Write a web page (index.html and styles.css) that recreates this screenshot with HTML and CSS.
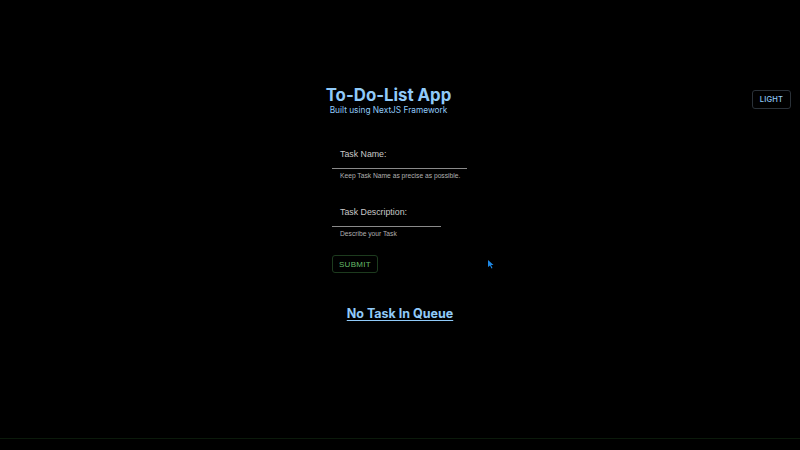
FILE: index.html
```html
<!DOCTYPE html>
<html>
<head>
<meta charset="utf-8">
<link rel="stylesheet" href="styles.css">
</head>
<body>
<div class="page">
  <header class="header">
    <div class="brand">
      <h1 class="title">To-Do-List App</h1>
      <p class="subtitle">Built using NextJS Framework</p>
    </div>
    <button class="theme-btn">LIGHT</button>
  </header>
  <form class="form">
    <div class="field">
      <label class="label">Task Name:</label>
      <div class="line line-name"></div>
      <p class="helper">Keep Task Name as precise as possible.</p>
    </div>
    <div class="field field-desc">
      <label class="label">Task Description:</label>
      <div class="line line-desc"></div>
      <p class="helper">Describe your Task</p>
    </div>
    <div class="actions">
      <button type="button" class="submit">SUBMIT</button>
      <svg class="cursor" width="6" height="9" viewBox="0 0 6 9"><path d="M0 0 L0 7 L2 5.5 L3.5 8.5 L4.5 8 L3 5 L5.5 5 Z" fill="#1e88e5"/></svg>
    </div>
  </form>
  <div class="empty"><a class="empty-link">No Task In Queue</a></div>
  <div class="footer-line"></div>
</div>
</body>
</html>
```
FILE: styles.css
```css
html, body {
  margin: 0;
  padding: 0;
  background: #000;
  width: 800px;
  height: 450px;
  overflow: hidden;
}
.page {
  display: flex;
  flex-direction: column;
  height: 450px;
  font-family: Inter, "Liberation Sans", sans-serif;
}
.header {
  display: flex;
  align-items: flex-start;
  padding-top: 85px;
}
.brand {
  margin-left: 326px;
  width: 125px;
  display: flex;
  flex-direction: column;
  align-items: center;
}
.title {
  margin: 0;
  font-size: 16.8px;
  font-weight: 700;
  line-height: 20px;
  color: #90caf9;
  white-space: nowrap;
}
.subtitle {
  margin: 0;
  font-size: 8.3px;
  line-height: 11px;
  color: #90caf9;
  white-space: nowrap;
}
.theme-btn {
  margin-left: auto;
  margin-right: 9px;
  margin-top: 5px;
  width: 39px;
  height: 19px;
  padding: 0;
  background: transparent;
  border: 1px solid #2a3138;
  border-radius: 3px;
  color: #90caf9;
  font-family: Inter, "Liberation Sans", sans-serif;
  font-size: 7.5px;
  font-weight: 500;
  letter-spacing: 0.2px;
}
.form {
  margin: 32px 0 0 332px;
  display: flex;
  flex-direction: column;
  font-family: "Liberation Sans", Arial, sans-serif;
}
.field {
  display: flex;
  flex-direction: column;
}
.field-desc {
  margin-top: 26px;
}
.label {
  padding-left: 8px;
  font-size: 8.8px;
  line-height: 12px;
  color: #c8c8c8;
}
.line {
  margin-top: 8px;
  height: 1px;
  background: #8a8a8a;
}
.line-name { width: 135px; }
.line-desc { width: 109px; }
.helper {
  margin: 3px 0 0 8px;
  font-size: 6.7px;
  line-height: 8px;
  color: #b0b0b0;
}
.actions {
  display: flex;
  align-items: flex-start;
  margin-top: 17px;
}
.submit {
  width: 46px;
  height: 18px;
  padding: 0;
  background: transparent;
  border: 1px solid #1d3b1e;
  border-radius: 3px;
  color: #66bb6a;
  font-family: "Liberation Sans", Arial, sans-serif;
  font-size: 8px;
  letter-spacing: 0.3px;
}
.cursor {
  margin-left: 110px;
  margin-top: 5px;
}
.empty {
  display: flex;
  justify-content: center;
  margin-top: 33px;
}
.empty-link {
  font-size: 12.5px;
  font-weight: 700;
  color: #90caf9;
  text-decoration: underline;
  text-underline-offset: 2px;
}
.footer-line {
  margin-top: auto;
  margin-bottom: 11px;
  height: 1px;
  background: #0b1a0b;
}
```
